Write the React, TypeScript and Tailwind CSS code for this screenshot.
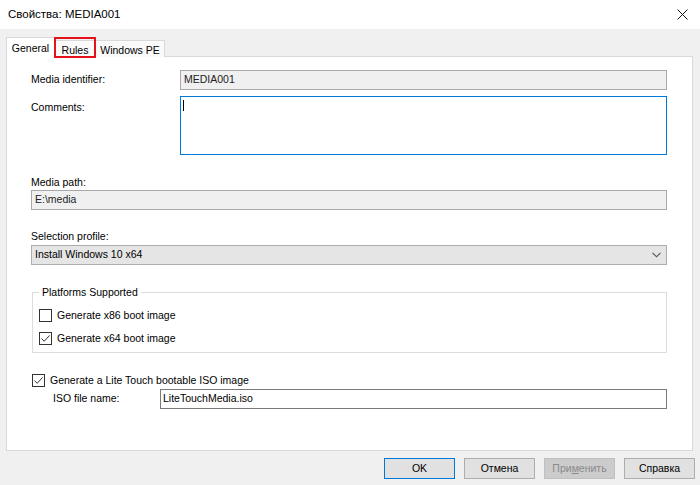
import React from "react";

const font = { fontFamily: '"Liberation Sans", Arial, sans-serif' };

function CheckBox({ checked }: { checked?: boolean }) {
  return (
    <div className="w-[13px] h-[13px] border border-[#333333] bg-white flex items-center justify-center shrink-0">
      {checked && (
        <svg width="11" height="11" viewBox="0 0 11 11">
          <path d="M1.5 5.5 L4.2 8.3 L9.6 2.4" fill="none" stroke="#333333" strokeWidth="1" />
        </svg>
      )}
    </div>
  );
}

function Button({
  children,
  primary,
  disabled,
}: {
  children: React.ReactNode;
  primary?: boolean;
  disabled?: boolean;
}) {
  const cls = primary
    ? "border-[#0078d7] bg-[#e1e1e1] text-black"
    : disabled
    ? "border-[#bfbfbf] bg-[#cccccc] text-[#8a8a8a]"
    : "border-[#adadad] bg-[#e1e1e1] text-black";
  return (
    <div
      className={`w-[71px] h-[21px] border flex items-center justify-center text-[10.5px] ${cls}`}
    >
      {children}
    </div>
  );
}

export default function App() {
  return (
    <div
      className="w-[700px] h-[485px] bg-[#f0f0f0] flex flex-col overflow-hidden text-black"
      style={font}
    >
      {/* Title bar */}
      <div className="h-[29px] bg-white flex items-center justify-between pl-[8px] pr-[12px] shrink-0">
        <span className="text-[11.5px] text-black">Свойства: MEDIA001</span>
        <svg width="11" height="11" viewBox="0 0 11 11">
          <path d="M0.5 0.5 L10.5 10.5 M10.5 0.5 L0.5 10.5" stroke="#111" strokeWidth="1" />
        </svg>
      </div>

      {/* Tabs */}
      <div className="flex items-end pl-[6px] mt-[8px] h-[20px] relative z-10 text-[10.5px]">
        <div className="h-[20px] w-[49px] bg-white border border-b-0 border-[#d9d9d9] flex items-start justify-center pt-[3px]">
          General
        </div>
        <div className="relative h-[17px] w-[41px] bg-[#fafafa] border-t border-r border-[#d9d9d9] flex items-start justify-center pt-[2px]">
          Rules
          <span className="absolute left-[-1px] right-[-1px] top-[-4px] bottom-[-1px] border-2 border-[#e5121b]" />
        </div>
        <div className="h-[17px] w-[69px] bg-[#fafafa] border-t border-r border-[#d9d9d9] flex items-start justify-center pt-[2px]">
          Windows PE
        </div>
      </div>

      {/* Panel */}
      <div className="ml-[6px] w-[687px] h-[395px] -mt-px bg-white border border-[#d9d9d9] flex flex-col pl-[24px] pr-[25px] text-[10.5px]">
        <div className="flex items-center mt-[13px]">
          <div className="w-[149px]">Media identifier:</div>
          <div className="flex-1 h-[20px] bg-[#f0f0f0] border border-[#a9a9a9] flex items-center pl-[3px] text-[#222]">
            MEDIA001
          </div>
        </div>
        <div className="flex items-start mt-[6px]">
          <div className="w-[149px] pt-[4px]">Comments:</div>
          <div className="flex-1 h-[59px] bg-white border border-[#0078d7] pl-[2px] pt-[3px]">
            <div className="w-px h-[11px] bg-black" />
          </div>
        </div>

        <div className="mt-[21px] leading-[12px]">Media path:</div>
        <div className="mt-[2px] h-[20px] bg-[#f0f0f0] border border-[#a9a9a9] flex items-center pl-[3px] text-[#222]">
          E:\media
        </div>

        <div className="mt-[20px] leading-[12px]">Selection profile:</div>
        <div className="mt-[3px] h-[20px] bg-[#e5e5e5] border border-[#adadad] flex items-center justify-between pl-[3px] pr-[5px]">
          <span>Install Windows 10 x64</span>
          <svg width="9" height="6" viewBox="0 0 9 6">
            <path d="M0.5 0.8 L4.5 4.8 L8.5 0.8" fill="none" stroke="#555" strokeWidth="1.1" />
          </svg>
        </div>

        {/* Group box */}
        <div className="relative mt-[27px] ml-[1px] h-[61px] border border-[#dcdcdc] flex flex-col pl-[6px] pt-[16px]">
          <span className="absolute left-[6px] top-[-7px] bg-white px-[3px] leading-[12px]">
            Platforms Supported
          </span>
          <div className="flex items-center gap-[5px] leading-[13px] h-[13px]">
            <CheckBox />
            <span>Generate x86 boot image</span>
          </div>
          <div className="flex items-center gap-[5px] mt-[10px] leading-[13px] h-[13px]">
            <CheckBox checked />
            <span>Generate x64 boot image</span>
          </div>
        </div>

        <div className="flex items-center gap-[5px] mt-[21px] ml-[1px] leading-[13px] h-[13px]">
          <CheckBox checked />
          <span>Generate a Lite Touch bootable ISO image</span>
        </div>
        <div className="flex items-center mt-[2px] pl-[22px]">
          <div className="w-[107px]">ISO file name:</div>
          <div className="flex-1 h-[20px] bg-white border border-[#7a7a7a] flex items-center pl-[2px]">
            LiteTouchMedia.iso
          </div>
        </div>
      </div>

      {/* Buttons */}
      <div className="flex justify-end gap-[9px] pr-[5px] mt-[7px]">
        <Button primary>OK</Button>
        <Button>Отмена</Button>
        <Button disabled>
          <span>
            При<span className="underline">м</span>енить
          </span>
        </Button>
        <Button>Справка</Button>
      </div>
    </div>
  );
}
